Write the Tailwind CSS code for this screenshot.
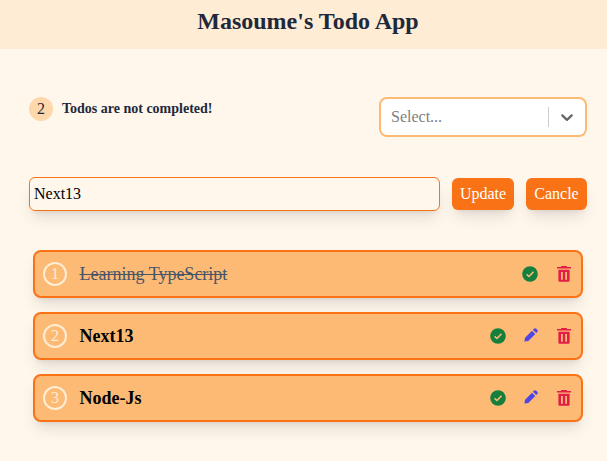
<!DOCTYPE html>
<html lang="en">
<head>
<meta charset="utf-8">
<title>Masoume's Todo App</title>
<script src="https://cdn.jsdelivr.net/npm/@tailwindcss/browser@4"></script>
</head>
<body class="min-h-screen overflow-hidden bg-[#fff6ec] font-['Liberation_Serif','Times_New_Roman',serif] text-base text-black">
<svg class="hidden">
  <symbol id="check" viewBox="0 0 16 16"><circle cx="8" cy="8" r="7.8" fill="#15803d"/><path d="M4.6 8.3 7 10.5 11.5 5.7" fill="none" stroke="#fdba74" stroke-width="1.6"/></symbol>
  <symbol id="pencil" viewBox="0 0 14 14"><path d="M.4 13.4 1 9.7 8 2.7 11.3 6 4.3 13ZM8.9 1.8l1-1a1.7 1.7 0 0 1 2.4 0l.9.9a1.7 1.7 0 0 1 0 2.4l-1 1Z" fill="#4f46e5"/></symbol>
  <symbol id="trash" viewBox="0 0 14 16"><path fill="#e11d48" fill-rule="evenodd" d="M4.5 0h5l.7 1H14v1.6H0V1h3.8ZM1.4 3.7h11.2V14.5a1.2 1.2 0 0 1-1.2 1.2H2.6a1.2 1.2 0 0 1-1.2-1.2ZM4 5.9v7.8h1.8V5.9ZM8.2 5.9v7.8H10V5.9Z"/></symbol>
</svg>
<header class="flex h-[49px] items-center justify-center bg-[#ffecd5] pb-[7px] pl-[9px]">
  <h1 class="text-2xl leading-8 font-bold text-[#1e293b]">Masoume's Todo App</h1>
</header>
<main class="pt-12 pr-5 pl-[29px]">
  <section class="flex h-10 items-start justify-between">
    <div class="flex items-center gap-[9px] text-[#1e293b]">
      <span class="flex size-6 items-center justify-center rounded-full bg-[#fed7aa]">2</span>
      <p class="text-sm font-bold">Todos are not completed!</p>
    </div>
    <div class="flex h-10 w-[208px] items-center rounded-lg border-2 border-[#fdba74] bg-white">
      <span class="flex-1 pl-[10px] text-[#808080]">Select...</span>
      <span class="h-5 w-px bg-[#ccc]"></span>
      <span class="flex w-9 justify-center"><svg class="size-5" viewBox="0 0 20 20" fill="#666"><path d="M4.516 7.548c0.436-0.446 1.043-0.481 1.576 0l3.908 3.747 3.908-3.747c0.533-0.481 1.141-0.446 1.574 0 0.436 0.445 0.408 1.197 0 1.615-0.406 0.418-4.695 4.502-4.695 4.502-0.217 0.223-0.502 0.335-0.787 0.335s-0.57-0.112-0.789-0.335c0 0-4.287-4.084-4.695-4.502s-0.436-1.17 0-1.615z"/></svg></span>
    </div>
  </section>
  <section class="mt-10 flex items-center gap-3">
    <div class="h-[34px] w-[411px] rounded-md border border-[#f97316] px-1 py-1 leading-6 shadow-lg">Next13</div>
    <button class="h-8 w-[62px] rounded-md bg-[#f97316] text-white shadow-lg">Update</button>
    <button class="h-8 w-[61px] rounded-md bg-[#f97316] text-white shadow-lg">Cancle</button>
  </section>
  <ul class="mt-[39px] mr-1 ml-1 flex flex-col gap-[14px]">
    <li class="flex h-12 items-center rounded-lg border-2 border-[#f97316] bg-[#fdba74] px-2 shadow-lg">
      <span class="flex size-6 items-center justify-center rounded-full border-2 border-[#ffedd5] text-[#ffedd5]">1</span>
      <span class="ml-[12.5px] flex-1 text-lg text-[#475569] line-through">Learning TypeScript</span>
      <svg class="mr-[19px] size-4"><use href="#check"/></svg>
      <svg class="mr-[2px] h-4 w-[14px]"><use href="#trash"/></svg>
    </li>
    <li class="flex h-12 items-center rounded-lg border-2 border-[#f97316] bg-[#fdba74] px-2 shadow-lg">
      <span class="flex size-6 items-center justify-center rounded-full border-2 border-[#ffedd5] text-[#ffedd5]">2</span>
      <span class="ml-[12.5px] flex-1 text-lg font-bold">Next13</span>
      <svg class="mr-[18px] size-4"><use href="#check"/></svg>
      <svg class="mr-[19px] mb-[2px] size-[14px]"><use href="#pencil"/></svg>
      <svg class="mr-[2px] h-4 w-[14px]"><use href="#trash"/></svg>
    </li>
    <li class="flex h-12 items-center rounded-lg border-2 border-[#f97316] bg-[#fdba74] px-2 shadow-lg">
      <span class="flex size-6 items-center justify-center rounded-full border-2 border-[#ffedd5] text-[#ffedd5]">3</span>
      <span class="ml-[12.5px] flex-1 text-lg font-bold">Node-Js</span>
      <svg class="mr-[18px] size-4"><use href="#check"/></svg>
      <svg class="mr-[19px] mb-[2px] size-[14px]"><use href="#pencil"/></svg>
      <svg class="mr-[2px] h-4 w-[14px]"><use href="#trash"/></svg>
    </li>
  </ul>
</main>
</body>
</html>
